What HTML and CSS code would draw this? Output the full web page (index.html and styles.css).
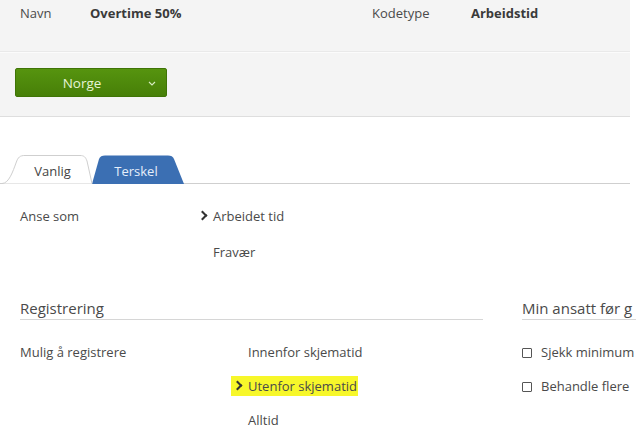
FILE: index.html
```html
<!DOCTYPE html>
<html lang="no">
<head>
    <meta charset="UTF-8">
    <meta name="viewport" content="width=device-width, initial-scale=1.0">
    <title>Kode</title>
    <link rel="stylesheet" href="styles.css">
</head>
<body>
    <!-- Kopf: Navn og kodetype -->
    <div class="header">
        <div class="header-info">
            <span class="info-label">Navn</span>
            <span class="info-value name-value">Overtime 50%</span>
            <span class="info-label type-label">Kodetype</span>
            <span class="info-value">Arbeidstid</span>
        </div>
        <div class="header-actions">
            <button class="country-button">
                <span>Norge</span>
                <svg class="caret" width="8" height="5" viewBox="0 0 8 5"><polyline points="1,1 4,4 7,1" fill="none" stroke="#d8ecc4" stroke-width="1.1"/></svg>
            </button>
        </div>
    </div>

    <!-- Faner -->
    <div class="tabs">
        <div class="tab tab-active">
            <svg class="tab-shape" width="91" height="29" viewBox="0 0 91 29"><path d="M0,28.5 C7,28.5 11,16 14,8 C16,2 18,0.5 23,0.5 H78 C82,0.5 83.5,2 85,6 L90,28.5" fill="#fff" stroke="#cfcfcf"/></svg>
            <span class="tab-label">Vanlig</span>
        </div>
        <div class="tab tab-blue">
            <svg class="tab-shape" width="92" height="29" viewBox="0 0 92 29"><path d="M0,29 L7,4 C8,1.5 10,0.5 13,0.5 H76 C79,0.5 81,1.5 82,4 L92,29 Z" fill="#3b6fb3"/></svg>
            <span class="tab-label">Terskel</span>
        </div>
    </div>

    <div class="content">
        <div class="field-row">
            <div class="field-label">Anse som</div>
            <div class="options">
                <div class="option selected"><span class="chevron"></span>Arbeidet tid</div>
                <div class="option">Fravær</div>
            </div>
        </div>

        <div class="sections">
            <div class="section section-main">
                <h2 class="section-title">Registrering</h2>
                <div class="field-row reg-row">
                    <div class="field-label">Mulig å registrere</div>
                    <div class="options reg-options">
                        <div class="option">Innenfor skjematid</div>
                        <div class="option selected highlight"><span class="chevron"></span>Utenfor skjematid</div>
                        <div class="option">Alltid</div>
                    </div>
                </div>
            </div>
            <div class="section section-side">
                <h2 class="section-title">Min ansatt før g</h2>
                <div class="checks">
                    <div class="check"><span class="box"></span>Sjekk minimum</div>
                    <div class="check"><span class="box"></span>Behandle flere</div>
                </div>
            </div>
        </div>
    </div>
</body>
</html>
```

FILE: styles.css
```css
body {
    margin: 0;
    overflow: hidden;
    font-family: "Open Sans", "Liberation Sans", sans-serif;
    font-size: 13px;
    color: #4a4a4a;
    background: #fff;
}
.header {
    width: 630px;
    background: #f4f4f4;
    border-bottom: 1px solid #dedede;
}
.header-info {
    display: flex;
    align-items: flex-start;
    height: 52px;
    padding: 4px 0 0 20px;
    box-sizing: border-box;
    line-height: 18px;
    border-bottom: 1px solid #e9e9e9;
    box-shadow: 0 1px 0 #fbfbfb;
}
.info-label {
    width: 70px;
}
.info-value {
    font-weight: bold;
    color: #3a3a3a;
}
.name-value {
    width: 282px;
}
.type-label {
    width: 99px;
}
.header-actions {
    padding: 16px 0 19px 15px;
}
.country-button {
    display: flex;
    align-items: center;
    width: 152px;
    height: 29px;
    padding: 0 10px 0 0;
    border: 1px solid #3f7406;
    border-radius: 2px;
    background: linear-gradient(#56940f, #477f08);
    color: #e6f4d6;
    font-family: inherit;
    font-size: 13.5px;
    cursor: pointer;
}
.country-button span {
    flex: 1;
    text-align: center;
}
.caret {
    margin-top: 2px;
}
.tabs {
    display: flex;
    margin-top: 38px;
    padding-left: 2px;
    width: 628px;
    height: 28px;
    border-bottom: 1px solid #cfcfcf;
}
.tab {
    position: relative;
    height: 28px;
    display: flex;
    align-items: center;
    justify-content: center;
}
.tab-active {
    width: 91px;
    z-index: 1;
}
.tab-blue {
    width: 92px;
    margin-left: -1px;
}
.tab-shape {
    position: absolute;
    left: 0;
    top: 0;
}
.tab-label {
    position: relative;
    padding-top: 4px;
}
.tab-active .tab-label {
    color: #444;
    padding-left: 10px;
}
.tab-blue .tab-label {
    color: #e6eefa;
    padding-right: 4px;
}
.content {
    padding: 23px 0 0 20px;
}
.field-row {
    display: flex;
    line-height: 18px;
}
.field-label {
    width: 193px;
    flex-shrink: 0;
}
.options {
    display: flex;
    flex-direction: column;
    gap: 18px;
}
.option {
    position: relative;
}
.chevron {
    position: absolute;
    left: -14px;
    top: 5px;
    width: 5px;
    height: 5px;
    border-right: 2px solid #333;
    border-top: 2px solid #333;
    transform: rotate(45deg);
}
.sections {
    display: flex;
    gap: 39px;
    margin-top: 37px;
}
.section-main {
    width: 463px;
    flex-shrink: 0;
}
.section-side {
    width: 200px;
    flex-shrink: 0;
}
.section-title {
    margin: 0;
    font-size: 15px;
    font-weight: normal;
    line-height: 20px;
    color: #4a4a4a;
    border-bottom: 1px solid #d6d6d6;
    padding-bottom: 1px;
    white-space: nowrap;
}
.reg-row {
    margin-top: 23px;
}
.reg-row .field-label {
    width: 228px;
}
.reg-options {
    gap: 16px;
}
.highlight {
    background: #f7f72a;
    margin: -1px 0 -1px -17px;
    padding: 1px 1px 1px 17px;
    align-self: flex-start;
}
.highlight .chevron {
    left: 3px;
    top: 6px;
}
.checks {
    margin-top: 23px;
    display: flex;
    flex-direction: column;
    gap: 16px;
    line-height: 18px;
}
.check {
    display: flex;
    align-items: center;
    white-space: nowrap;
}
.box {
    width: 8px;
    height: 8px;
    border: 1px solid #555;
    border-radius: 1px;
    margin: 1px 9px 0 0;
}
```
